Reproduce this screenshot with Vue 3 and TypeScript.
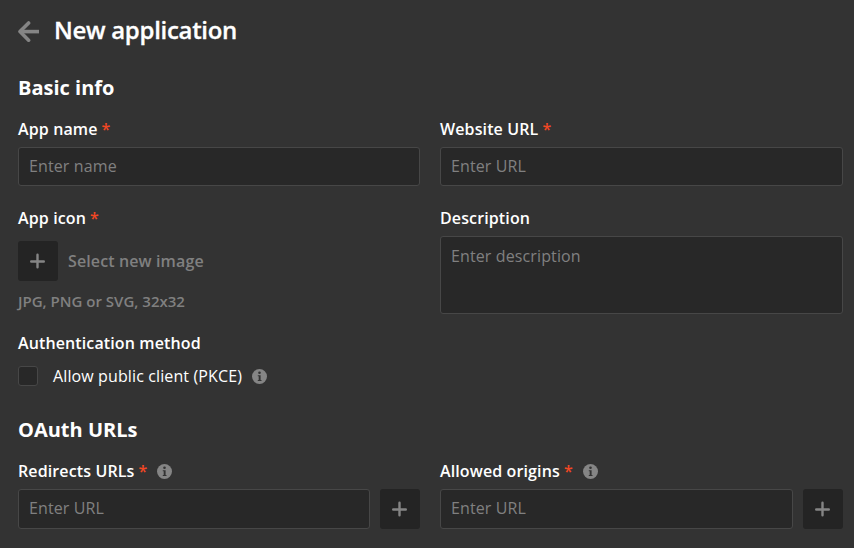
<script setup lang="ts">
import { ref, h, type FunctionalComponent } from 'vue'

const name = ref('')
const website = ref('')
const description = ref('')
const redirect = ref('')
const origin = ref('')
const publicClient = ref(false)

const PlusIcon: FunctionalComponent = () =>
  h('svg', { width: 16, height: 16, viewBox: '0 0 16 16', fill: 'none', stroke: '#858585', 'stroke-width': 2.4, 'stroke-linecap': 'round' }, [
    h('path', { d: 'M7.5 1.7v12.6M1.2 8.5h12.6' }),
  ])

const InfoIcon: FunctionalComponent = () =>
  h('svg', { width: 15, height: 15, viewBox: '0 0 15 15' }, [
    h('circle', { cx: 7.5, cy: 7.5, r: 7.5, fill: '#858585' }),
    h('circle', { cx: 7.5, cy: 3.8, r: 1.3, fill: '#333' }),
    h('path', { d: 'M5.8 6.2h2.8v4.7h.9v1.1H5.8v-1.1h.9V7.3h-.9z', fill: '#333' }),
  ])
</script>

<template>
  <form class="page" @submit.prevent>
    <header class="header">
      <button type="button" class="back" aria-label="Back">
        <svg width="22" height="22" viewBox="0 0 22 22" fill="none" stroke="#858585" stroke-width="3.6">
          <path d="M10.6 2 2 10.6 10.6 19.2" stroke-linecap="round" stroke-linejoin="round" />
          <path d="M3 10.6h18" />
        </svg>
      </button>
      <h1 class="title">New application</h1>
    </header>

    <h2 class="section">Basic info</h2>
    <div class="grid">
      <div class="field">
        <div class="label"><span>App name</span><span class="req">*</span></div>
        <input v-model="name" class="input" placeholder="Enter name" />
      </div>
      <div class="field">
        <div class="label"><span>Website URL</span><span class="req">*</span></div>
        <input v-model="website" class="input" placeholder="Enter URL" />
      </div>
      <div class="field">
        <div class="label"><span>App icon</span><span class="req">*</span></div>
        <div class="picker">
          <button type="button" class="add" aria-label="Select image"><PlusIcon /></button>
          <span class="pick-text">Select new image</span>
        </div>
        <div class="hint">JPG, PNG or SVG, 32x32</div>
      </div>
      <div class="field">
        <div class="label"><span>Description</span></div>
        <textarea v-model="description" class="input area" placeholder="Enter description"></textarea>
      </div>
    </div>

    <div class="auth">
      <div class="label"><span>Authentication method</span></div>
      <label class="check">
        <input v-model="publicClient" type="checkbox" class="box" />
        <span class="check-text">Allow public client (PKCE)</span>
        <InfoIcon />
      </label>
    </div>

    <h2 class="section oauth">OAuth URLs</h2>
    <div class="grid">
      <div class="field">
        <div class="label"><span>Redirects URLs</span><span class="req">*</span><span class="info"><InfoIcon /></span></div>
        <div class="url-row">
          <input v-model="redirect" class="input url" placeholder="Enter URL" />
          <button type="button" class="add" aria-label="Add redirect URL"><PlusIcon /></button>
        </div>
      </div>
      <div class="field">
        <div class="label"><span>Allowed origins</span><span class="req">*</span><span class="info"><InfoIcon /></span></div>
        <div class="url-row">
          <input v-model="origin" class="input url" placeholder="Enter URL" />
          <button type="button" class="add" aria-label="Add origin"><PlusIcon /></button>
        </div>
      </div>
    </div>
  </form>
</template>

<style>
body {
  background: #333;
  overflow: hidden;
}
</style>

<style scoped>
.page {
  box-sizing: border-box;
  height: 548px;
  padding: 14px 11px 0 18px;
  background: #333;
  color: #fff;
  font-family: 'Open Sans', sans-serif;
  font-size: 16px;
  letter-spacing: 0.12px;
}
.header {
  display: flex;
  align-items: center;
  gap: 14px;
  height: 32px;
}
.back {
  display: flex;
  padding: 3px 0 0;
  border: 0;
  background: none;
}
.title {
  margin: 0;
  font-size: 24px;
  line-height: 32px;
  font-weight: 600;
  letter-spacing: -0.3px;
  -webkit-text-stroke: 0.3px #fff;
}
.section {
  margin: 30px 0 18px;
  font-size: 20px;
  line-height: 24px;
  font-weight: 700;
  letter-spacing: 0;
}
.section.oauth {
  margin-top: 32px;
}
.grid {
  display: grid;
  grid-template-columns: 402px 403px;
  column-gap: 20px;
  row-gap: 21px;
}
.label {
  display: flex;
  align-items: center;
  height: 22px;
  margin-bottom: 7px;
  font-weight: 600;
  white-space: nowrap;
}
.req {
  margin-left: 4px;
  color: #f24724;
}
.info {
  display: flex;
  margin-left: 10px;
}
.input {
  box-sizing: border-box;
  display: block;
  width: 100%;
  height: 39px;
  margin: 0;
  padding: 0 10px 2px;
  border: 1px solid #474747;
  border-radius: 3px;
  outline: 0;
  background: #282828;
  color: #fff;
  font: inherit;
  letter-spacing: inherit;
}
.input::placeholder {
  color: #808080;
  opacity: 1;
}
.area {
  height: 78px;
  padding: 8px 10px;
  line-height: 22px;
  resize: none;
}
.picker {
  display: flex;
  align-items: center;
  gap: 10px;
  margin-top: 12px;
  font-weight: 600;
  color: #808080;
}
.add {
  display: flex;
  flex: none;
  align-items: center;
  justify-content: center;
  width: 40px;
  height: 40px;
  padding: 0;
  border: 0;
  border-radius: 3px;
  background: #242424;
}
.hint {
  height: 22px;
  margin: 9px 0 1px;
  font-size: 15px;
  line-height: 22px;
  font-weight: 600;
  letter-spacing: 0;
  color: #808080;
}
.auth {
  margin-top: 18px;
}
.check {
  display: flex;
  align-items: center;
  height: 20px;
  margin-top: 12px;
}
.box {
  appearance: none;
  box-sizing: border-box;
  width: 20px;
  height: 20px;
  margin: 0 15px 0 0;
  border: 1px solid #474747;
  border-radius: 3px;
  background: #282828;
}
.check-text {
  margin-right: 10px;
}
.url-row {
  display: flex;
  gap: 10px;
}
.url {
  flex: 1;
  min-width: 0;
  height: 40px;
}
</style>
